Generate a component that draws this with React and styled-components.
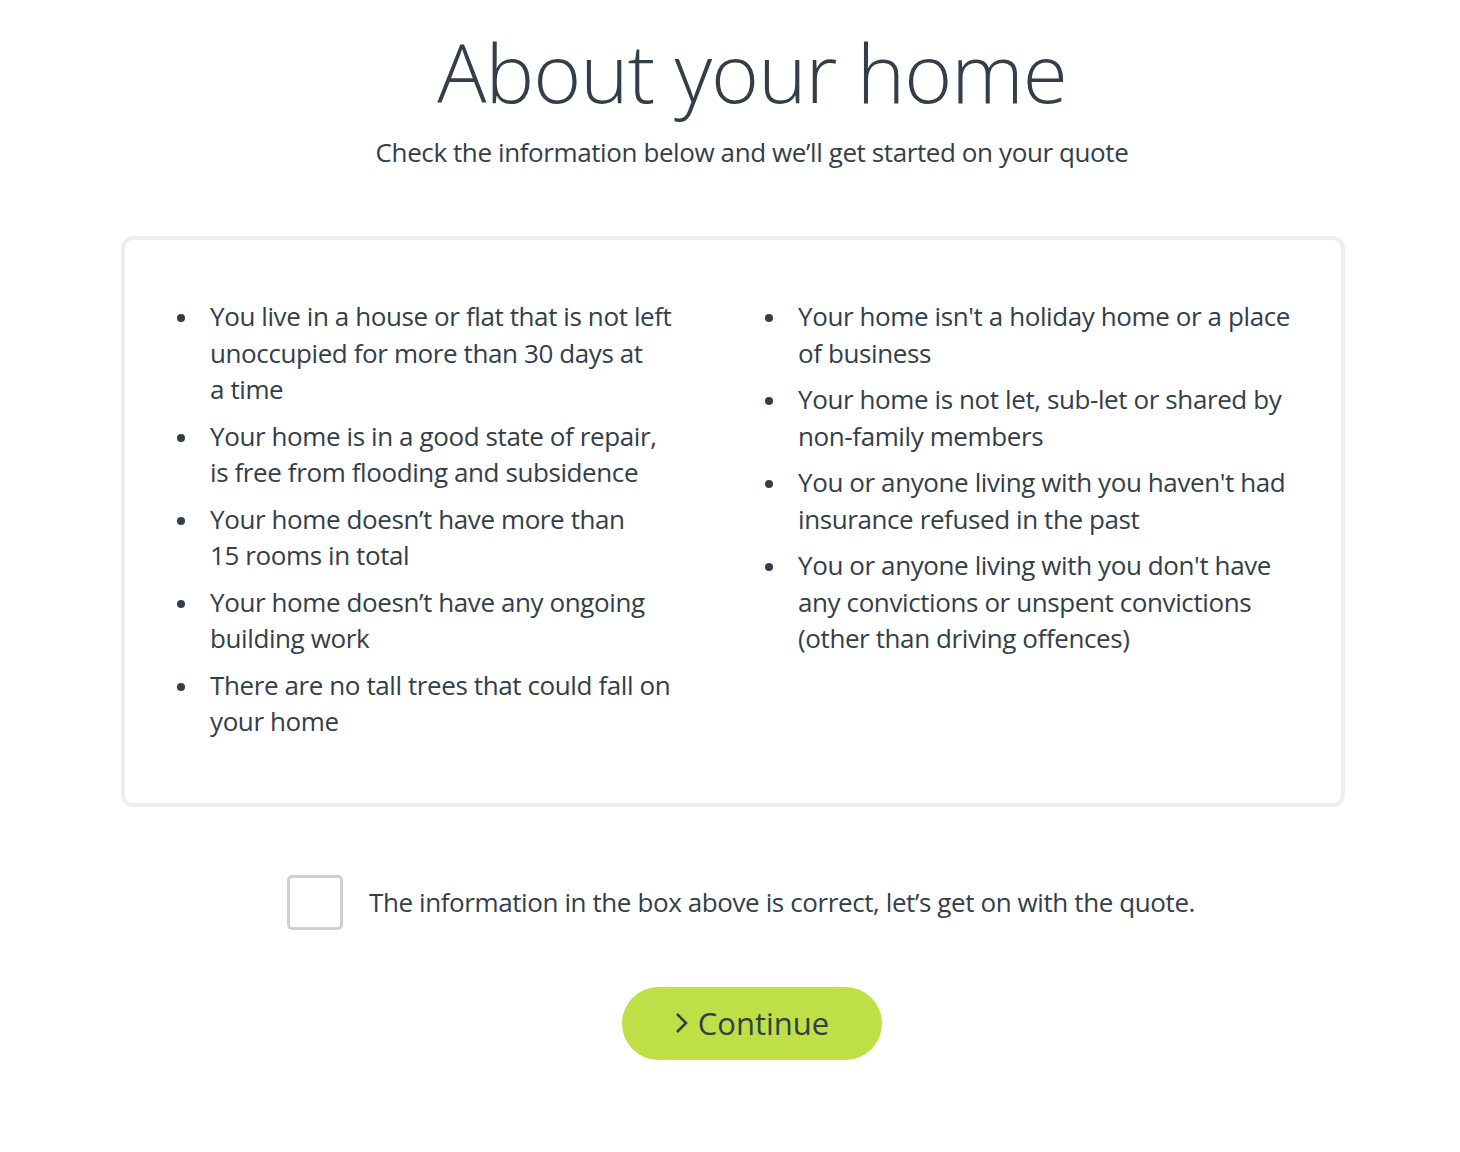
import React, { useState } from 'react';
import styled, { createGlobalStyle } from 'styled-components';

const GlobalStyle = createGlobalStyle`
  body {
    margin: 0;
    background: #ffffff;
    font-family: 'Open Sans', 'Noto Sans', sans-serif;
    color: #333e48;
  }
`;

const Page = styled.div`
  width: 1460px;
  display: flex;
  flex-direction: column;
  align-items: center;
  padding-top: 21px;
`;

const Title = styled.h1`
  margin: 0 0 0 44px;
  font-size: 82px;
  font-weight: 300;
  line-height: 100px;
  letter-spacing: -1px;
`;

const Subtitle = styled.p`
  margin: 11px 0 0 44px;
  font-size: 26px;
  line-height: 40px;
  letter-spacing: -0.4px;
`;

const InfoBox = styled.div`
  box-sizing: border-box;
  width: 1224px;
  margin-top: 64px;
  margin-left: 6px;
  border: 4px solid #eeeeee;
  border-radius: 12px;
  padding: 58px 30px 53px 50px;
  display: grid;
  grid-template-columns: 538px 1fr;
  column-gap: 50px;
`;

const List = styled.ul`
  margin: 0;
  padding: 0;
  list-style: none;
`;

const Item = styled.li`
  position: relative;
  padding-left: 35px;
  font-size: 26px;
  line-height: 36.5px;
  letter-spacing: -0.4px;
  margin-bottom: 10px;
  max-width: ${p => p.$max};

  &::before {
    content: '';
    position: absolute;
    left: 2px;
    top: 16px;
    width: 8px;
    height: 8px;
    border-radius: 50%;
    background: #333e48;
  }
`;

const ConfirmRow = styled.label`
  display: flex;
  align-items: center;
  gap: 26px;
  margin-top: 68px;
  margin-left: 22px;
  cursor: pointer;
`;

const Box = styled.span`
  box-sizing: border-box;
  width: 56px;
  height: 55px;
  border: 3px solid #d0d0d0;
  border-radius: 5px;
  display: flex;
  align-items: center;
  justify-content: center;
  background: #fff;
`;

const HiddenInput = styled.input`
  display: none;
`;

const ConfirmText = styled.span`
  font-size: 26px;
  letter-spacing: -0.4px;
`;

const ContinueButton = styled.button`
  margin: 57px 0 0 44px;
  width: 260px;
  height: 73px;
  border: none;
  border-radius: 37px;
  background: #bedf46;
  color: #333e48;
  font-family: inherit;
  font-size: 31px;
  display: flex;
  align-items: center;
  justify-content: center;
  gap: 9px;
  cursor: pointer;
`;

const left = [
  'You live in a house or flat that is not left unoccupied for more than 30 days at a\u00a0time',
  'Your home is in a good state of repair, is free from flooding and subsidence',
  'Your home doesn\u2019t have more than 15\u00a0rooms in total',
  'Your home doesn\u2019t have any ongoing building work',
  'There are no tall trees that could fall on your home',
];

const right = [
  "Your home isn't a holiday home or a place of business",
  'Your home is not let, sub-let or shared by non-family members',
  "You or anyone living with you haven't had insurance refused in the past",
  "You or anyone living with you don't have any convictions or unspent convictions (other than driving offences)",
];

export default function App() {
  const [checked, setChecked] = useState(false);

  return (
    <Page>
      <GlobalStyle />
      <Title>About your home</Title>
      <Subtitle>Check the information below and we’ll get started on your quote</Subtitle>

      <InfoBox>
        <List>
          {left.map((t, i) => (
            <Item key={i} $max="466px">{t}</Item>
          ))}
        </List>
        <List>
          {right.map((t, i) => (
            <Item key={i} $max="505px">{t}</Item>
          ))}
        </List>
      </InfoBox>

      <ConfirmRow>
        <HiddenInput type="checkbox" checked={checked} onChange={() => setChecked(!checked)} />
        <Box>
          {checked && (
            <svg width="30" height="30" viewBox="0 0 24 24" fill="none" stroke="#333e48" strokeWidth="3">
              <path d="M4 12l5 5L20 6" />
            </svg>
          )}
        </Box>
        <ConfirmText>The information in the box above is correct, let’s get on with the quote.</ConfirmText>
      </ConfirmRow>

      <ContinueButton>
        <svg width="14" height="24" viewBox="0 0 14 24" fill="none" stroke="#333e48" strokeWidth="2.5">
          <path d="M2 3l9 9-9 9" />
        </svg>
        Continue
      </ContinueButton>
    </Page>
  );
}
